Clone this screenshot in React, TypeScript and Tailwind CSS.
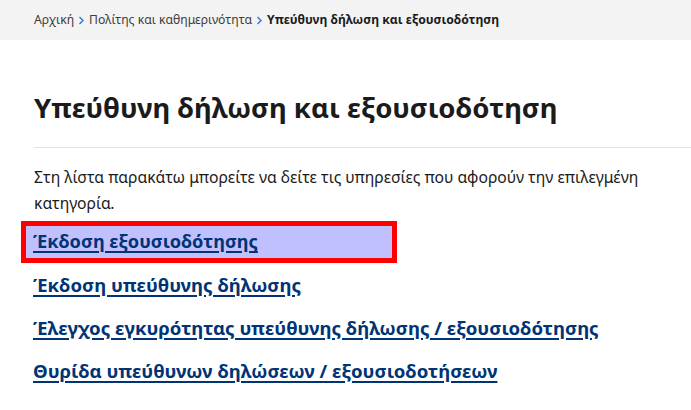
const LINKS = [
  "Έκδοση εξουσιοδότησης",
  "Έκδοση υπεύθυνης δήλωσης",
  "Έλεγχος εγκυρότητας υπεύθυνης δήλωσης / εξουσιοδότησης",
  "Θυρίδα υπεύθυνων δηλώσεων / εξουσιοδοτήσεων",
];

function Chevron() {
  return (
    <svg width="7" height="9" viewBox="0 0 7 9" className="mx-[4px] inline-block" aria-hidden="true">
      <path d="M1.5 1 L5 4.5 L1.5 8" fill="none" stroke="#2b78d0" strokeWidth="1.4" />
    </svg>
  );
}

export default function App() {
  return (
    <div className="min-h-[410px] w-full overflow-hidden bg-white font-['Noto_Sans','Open_Sans',sans-serif] text-[#1b1b1b]">
      <nav className="flex h-[40px] items-center bg-[#f3f3f3] pl-[34px] text-[12.2px] text-[#3c3c3c]">
        <span>Αρχική</span>
        <Chevron />
        <span>Πολίτης και καθημερινότητα</span>
        <Chevron />
        <span className="font-bold text-[#1b1b1b]">Υπεύθυνη δήλωση και εξουσιοδότηση</span>
      </nav>

      <main className="pl-[34px]">
        <h1 className="pt-[49px] text-[27.5px] font-bold leading-[38px] text-[#1b1b1b]">
          Υπεύθυνη δήλωση και εξουσιοδότηση
        </h1>
        <hr className="mt-[20px] border-t border-[#e2e2e2]" />
        <p className="mt-[16px] pr-[20px] text-[15.7px] leading-[26px] text-[#1b1b1b]">
          Στη λίστα παρακάτω μπορείτε να δείτε τις υπηρεσίες που αφορούν την επιλεγμένη κατηγορία.
        </p>
      </main>

      <ul className="mt-[5px] flex flex-col gap-[1px] pl-[21px]">
        {LINKS.map((label, i) => (
          <li key={label}>
            <div
              className={
                i === 0
                  ? "flex h-[42px] w-[376px] items-center border-[5px] border-[#ff0000] bg-[#c0c0ff] pl-[7px]"
                  : "flex h-[42px] items-center border-[5px] border-transparent pl-[7px]"
              }
            >
              <a
                href="#"
                className={
                  i === 0
                    ? "text-[18.2px] font-bold text-[#003476] underline decoration-[1.5px] underline-offset-[3px]"
                    : "text-[18.6px] font-bold text-[#003476] underline decoration-[1.5px] underline-offset-[3px]"
                }
              >
                {label}
              </a>
            </div>
          </li>
        ))}
      </ul>
    </div>
  );
}
